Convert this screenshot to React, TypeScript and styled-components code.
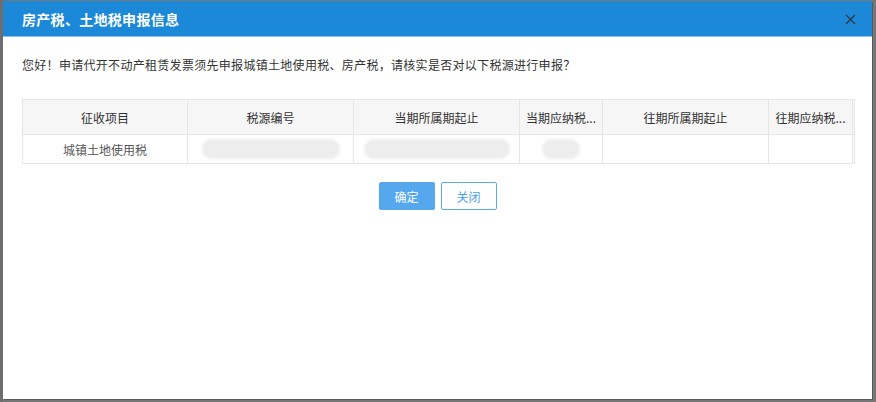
import styled, { createGlobalStyle } from "styled-components";

const GlobalStyle = createGlobalStyle`
  html, body {
    margin: 0;
    padding: 0;
    background: #767676;
    font-family: "Microsoft YaHei", "Noto Sans CJK SC", "Noto Sans", sans-serif;
  }
  * { box-sizing: border-box; }
`;

const Backdrop = styled.div`
  width: 876px;
  height: 402px;
  padding: 1px 4px 3px 3px;
  background: linear-gradient(to right, #6e6e6e 0, #6e6e6e 3px, transparent 3px),
    #767676;
`;

const Dialog = styled.div`
  width: 869px;
  height: 398px;
  background: #ffffff;
  box-shadow: 1px 1px 0 #5a5a5a;
  display: flex;
  flex-direction: column;
`;

const Header = styled.div`
  height: 36px;
  flex-shrink: 0;
  background: #1b88d8;
  border-bottom: 1px solid #8cc3ec;
  display: flex;
  align-items: center;
  justify-content: space-between;
  padding: 0 14px 0 19px;
`;

const Title = styled.h1`
  margin: 0;
  font-size: 14px;
  font-weight: bold;
  color: #ffffff;
  letter-spacing: 0.3px;
`;

const Close = styled.button`
  width: 16px;
  height: 16px;
  padding: 0;
  border: none;
  background: transparent;
  display: flex;
  align-items: center;
  justify-content: center;
  cursor: pointer;
  margin-top: 2px;
`;

const Body = styled.div`
  padding: 18px 19px 0 19px;
  display: flex;
  flex-direction: column;
`;

const Message = styled.p`
  margin: 0;
  font-size: 12px;
  letter-spacing: 0.3px;
  line-height: 20px;
  color: #333333;
`;

const Table = styled.table`
  margin-top: 24px;
  width: 832px;
  border-collapse: collapse;
  table-layout: fixed;
  font-size: 12px;
`;

const HeadCell = styled.th`
  height: 35px;
  padding: 0 4px;
  background: #f6f6f6;
  border: 1px solid #e6e6e6;
  font-weight: normal;
  color: #333333;
  text-align: center;
  white-space: nowrap;
  overflow: hidden;
`;

const Cell = styled.td`
  height: 29px;
  padding: 0 8px;
  border: 1px solid #e6e6e6;
  color: #555555;
  text-align: center;
  white-space: nowrap;
  overflow: hidden;
`;

const Redacted = styled.span<{ $w: number }>`
  display: inline-block;
  vertical-align: middle;
  width: ${({ $w }) => $w}px;
  height: 20px;
  border-radius: 10px;
  background: #ededed;
  filter: blur(1.5px);
`;

const Actions = styled.div`
  margin-top: 18px;
  display: flex;
  justify-content: center;
  gap: 6px;
`;

const Button = styled.button<{ $primary?: boolean }>`
  width: 56px;
  height: 28px;
  font-family: inherit;
  font-size: 12px;
  border-radius: 2px;
  cursor: pointer;
  border: 1px solid ${({ $primary }) => ($primary ? "#55a8ee" : "#5aa9ee")};
  background: ${({ $primary }) => ($primary ? "#55a8ee" : "#ffffff")};
  color: ${({ $primary }) => ($primary ? "#ffffff" : "#4a9fe6")};
`;

function App() {
  return (
    <>
      <GlobalStyle />
      <Backdrop>
        <Dialog>
          <Header>
            <Title>房产税、土地税申报信息</Title>
            <Close aria-label="关闭">
              <svg width="11" height="11" viewBox="0 0 11 11">
                <path d="M1 1L10 10M10 1L1 10" stroke="#2d3a48" strokeWidth="1.4" />
              </svg>
            </Close>
          </Header>
          <Body>
            <Message>您好！申请代开不动产租赁发票须先申报城镇土地使用税、房产税，请核实是否对以下税源进行申报？</Message>
            <Table>
              <colgroup>
                <col width={165} />
                <col width={166} />
                <col width={166} />
                <col width={83} />
                <col width={166} />
                <col width={84} />
                <col width={2} />
              </colgroup>
              <thead>
                <tr>
                  <HeadCell>征收项目</HeadCell>
                  <HeadCell>税源编号</HeadCell>
                  <HeadCell>当期所属期起止</HeadCell>
                  <HeadCell>当期应纳税...</HeadCell>
                  <HeadCell>往期所属期起止</HeadCell>
                  <HeadCell>往期应纳税...</HeadCell>
                  <HeadCell />
                </tr>
              </thead>
              <tbody>
                <tr>
                  <Cell>城镇土地使用税</Cell>
                  <Cell><Redacted $w={138} /></Cell>
                  <Cell><Redacted $w={146} /></Cell>
                  <Cell><Redacted $w={38} /></Cell>
                  <Cell />
                  <Cell />
                  <Cell />
                </tr>
              </tbody>
            </Table>
            <Actions>
              <Button $primary>确定</Button>
              <Button>关闭</Button>
            </Actions>
          </Body>
        </Dialog>
      </Backdrop>
    </>
  );
}

export default App;
